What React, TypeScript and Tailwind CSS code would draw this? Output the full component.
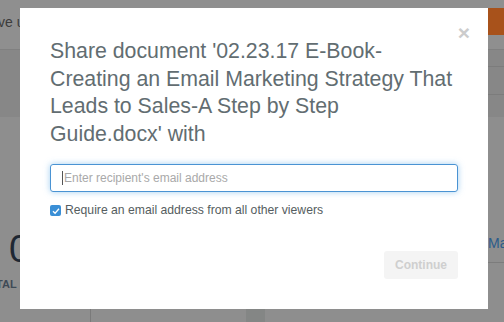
import React from 'react';

const font = { fontFamily: '"Liberation Sans", Arial, sans-serif' };

export default function App() {
  return (
    <div className="relative w-[504px] h-[322px] overflow-hidden bg-[#8e8e8e]" style={font}>
      {/* page behind the overlay */}
      <div className="flex flex-col h-full">
        <div className="h-[50px] flex items-start justify-between border-b border-[#808080] bg-[#8f8f8f]">
          <span className="text-[14px] text-[#3c3c3c] -ml-[2px] mt-[12px]">ve us</span>
          <div className="mt-[8px] h-[27px] w-[42px] bg-[#a8521b] flex items-center pl-[2px] text-[14px] text-[#e0d0c0]">
            gra
          </div>
        </div>
        <div className="h-[67px] bg-[#878787] flex justify-end">
          <div className="w-[16px] flex flex-col">
            <div className="h-[17px] border-b border-[#7c7c7c]" />
            <div className="h-[28px] border-b border-[#7c7c7c]" />
          </div>
        </div>
        <div className="flex-1 flex">
          <div className="w-[91px] flex flex-col pt-[113px] border-r border-[#7a7a7a]">
            <span className="text-[38px] leading-[38px] text-[#1e2733] pl-[9px]">0</span>
            <span className="text-[11px] font-bold text-[#3e4a56] -ml-[19px] mt-[8px]">TOTAL</span>
          </div>
          <div className="w-[155px]" />
          <div className="w-[19px] bg-[#848685]" />
          <div className="flex-1 flex justify-end">
            <div className="w-[16px] pt-[116px]">
              <div className="text-[14px] text-[#2b5b8a] border-b border-[#7c7c7c] pb-[8px]">Ma</div>
            </div>
          </div>
        </div>
      </div>

      {/* modal */}
      <div className="absolute left-[20px] top-[8px] w-[468px] h-[301px] bg-white px-[30px] pt-[30px]">
        <button className="absolute right-[18px] top-[14px] text-[21px] font-bold leading-[21px] text-[#cccccc]">
          ×
        </button>
        <h2 className="text-[21.3px] leading-[27.6px] text-[#626d71] -mr-[6px] whitespace-nowrap">
          Share document '02.23.17 E-Book-
          <br />
          Creating an Email Marketing Strategy That
          <br />
          Leads to Sales-A Step by Step
          <br />
          Guide.docx' with
        </h2>
        <div className="mt-[16px] relative h-[28px] rounded-[3px] border border-[#4a93d3] shadow-[0_0_6px_rgba(102,175,233,0.6)] flex items-center pl-[11px]">
          <span className="w-px h-[14px] bg-[#555]" />
          <span className="text-[12px] text-[#a9a9a9] ml-[1px]">Enter recipient's email address</span>
        </div>
        <label className="mt-[9px] flex items-center gap-[4px]">
          <span className="w-[11px] h-[11px] rounded-[2px] bg-[#3a8fd6] flex items-center justify-center">
            <svg width="8" height="8" viewBox="0 0 8 8" fill="none">
              <path d="M1 4.2 L3.1 6.2 L7 1.8" stroke="white" strokeWidth="1.3" />
            </svg>
          </span>
          <span className="text-[12.2px] text-[#555d60]">Require an email address from all other viewers</span>
        </label>
        <div className="flex justify-end mt-[31px]">
          <button className="h-[28px] px-[11px] rounded-[3px] bg-[#f4f4f4] text-[12px] font-bold text-[#cfcfcf]">
            Continue
          </button>
        </div>
      </div>
    </div>
  );
}
